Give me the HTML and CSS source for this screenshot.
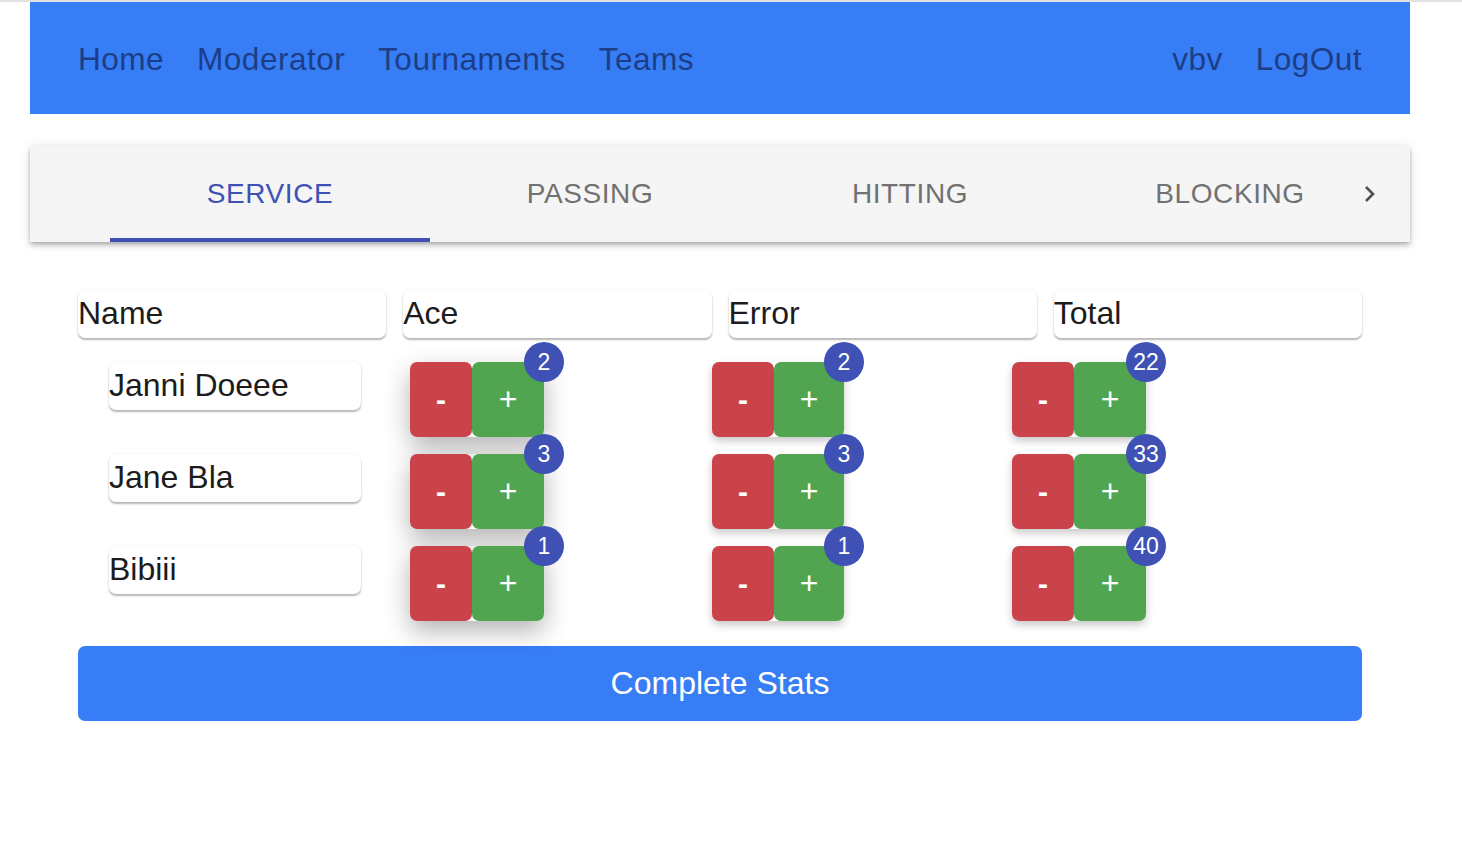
FILE: index.html
```html
<!DOCTYPE html>
<html lang="en">
<head>
<meta charset="utf-8">
<title>Stats</title>
<link rel="stylesheet" href="styles.css">
</head>
<body>
<div class="page">
  <nav class="navbar">
    <div class="nav-left">
      <a class="nav-link">Home</a>
      <a class="nav-link">Moderator</a>
      <a class="nav-link">Tournaments</a>
      <a class="nav-link">Teams</a>
    </div>
    <div class="nav-right">
      <a class="nav-link">vbv</a>
      <a class="nav-link">LogOut</a>
    </div>
  </nav>

  <div class="tabbar">
    <div class="tab-spacer"></div>
    <div class="tab-viewport">
      <div class="tab tab-active">SERVICE<span class="indicator"></span></div>
      <div class="tab">PASSING</div>
      <div class="tab">HITTING</div>
      <div class="tab">BLOCKING</div>
    </div>
    <div class="tab-arrow">
      <svg width="14" height="22" viewBox="0 0 14 22"><path d="M3 4 L10 11 L3 18" fill="none" stroke="#505050" stroke-width="2.6"/></svg>
    </div>
  </div>

  <section class="stats">
    <div class="head-row">
      <div class="head-cell">Name</div>
      <div class="head-cell">Ace</div>
      <div class="head-cell">Error</div>
      <div class="head-cell">Total</div>
    </div>

    <div class="rows">
      <div class="row">
        <div class="name-cell">Janni Doeee</div>
        <div class="group group-hot"><button class="btn minus">-</button><button class="btn plus">+</button><span class="badge">2</span></div>
        <div class="group"><button class="btn minus">-</button><button class="btn plus plus-narrow">+</button><span class="badge">2</span></div>
        <div class="group"><button class="btn minus">-</button><button class="btn plus">+</button><span class="badge">22</span></div>
      </div>
      <div class="row">
        <div class="name-cell">Jane Bla</div>
        <div class="group group-hot"><button class="btn minus">-</button><button class="btn plus">+</button><span class="badge">3</span></div>
        <div class="group"><button class="btn minus">-</button><button class="btn plus plus-narrow">+</button><span class="badge">3</span></div>
        <div class="group"><button class="btn minus">-</button><button class="btn plus">+</button><span class="badge">33</span></div>
      </div>
      <div class="row">
        <div class="name-cell">Bibiii</div>
        <div class="group group-hot"><button class="btn minus">-</button><button class="btn plus">+</button><span class="badge">1</span></div>
        <div class="group"><button class="btn minus">-</button><button class="btn plus plus-narrow">+</button><span class="badge">1</span></div>
        <div class="group"><button class="btn minus">-</button><button class="btn plus">+</button><span class="badge">40</span></div>
      </div>
    </div>

    <button class="complete">Complete Stats</button>
  </section>
</div>
</body>
</html>
```

FILE: styles.css
```css
html, body {
  margin: 0;
  padding: 0;
  background: #ffffff;
}
body {
  border-top: 2px solid #e2e2e2;
  font-family: "Liberation Sans", Arial, sans-serif;
  color: #1c1c1c;
}
.page {
  width: 1380px;
  margin-left: 30px;
}
.navbar {
  height: 112px;
  background: #377df5;
  display: flex;
  align-items: center;
  justify-content: space-between;
  padding: 4px 48px 0;
  box-sizing: border-box;
}
.nav-left, .nav-right {
  display: flex;
  gap: 33px;
}
.nav-link {
  font-size: 31.6px;
  letter-spacing: 0.45px;
  color: #1d3e86;
  line-height: 1;
}

.tabbar {
  margin-top: 32px;
  height: 96px;
  background: #f5f5f5;
  display: flex;
  box-shadow: 0 2px 4px -1px rgba(0,0,0,0.2), 0 4px 5px 0 rgba(0,0,0,0.14), 0 1px 10px 0 rgba(0,0,0,0.12);
}
.tab-spacer {
  width: 80px;
  flex: none;
}
.tab-viewport {
  flex: 1;
  display: flex;
  overflow: hidden;
}
.tab {
  position: relative;
  flex: none;
  width: 320px;
  display: flex;
  align-items: center;
  justify-content: center;
  font-size: 28px;
  letter-spacing: 0.6px;
  color: #717171;
}
.tab-active {
  color: #3f51b5;
}
.indicator {
  position: absolute;
  left: 0;
  right: 0;
  bottom: 0;
  height: 4px;
  background: #3f51b5;
}
.tab-arrow {
  width: 40px;
  flex: none;
  margin-right: 20px;
  display: flex;
  align-items: center;
  justify-content: center;
}

.stats {
  padding: 48px 48px 0;
}
.head-row {
  display: grid;
  grid-template-columns: repeat(4, 1fr);
  gap: 17px;
}
.head-cell {
  height: 48px;
  line-height: 46px;
  font-size: 32px;
  background: #fff;
  border-radius: 7px;
  box-shadow: 0 2px 2px rgba(0,0,0,0.28), 0 0 3px rgba(0,0,0,0.06);
}
.rows {
  margin-top: 24px;
  display: flex;
  flex-direction: column;
  gap: 17px;
}
.row {
  display: grid;
  grid-template-columns: 332px 302px 300px 1fr;
  align-items: start;
  height: 75px;
}
.name-cell {
  margin-left: 31px;
  width: 252px;
  height: 48px;
  line-height: 46px;
  font-size: 32px;
  background: #fff;
  border-radius: 7px;
  box-shadow: 0 2px 2px rgba(0,0,0,0.28), 0 0 3px rgba(0,0,0,0.06);
}
.group {
  position: relative;
  display: flex;
  width: max-content;
  border-radius: 7px;
  box-shadow: 0 4px 8px rgba(0,0,0,0.22);
}
.group-hot {
  box-shadow: 0 10px 26px rgba(0,0,0,0.3);
}
.btn {
  height: 75px;
  border: none;
  border-radius: 7px;
  padding: 0;
  color: #fff;
  font-family: "Liberation Sans", Arial, sans-serif;
  font-size: 32px;
  display: flex;
  align-items: center;
  justify-content: center;
}
.minus {
  width: 62px;
  background: #cb434a;
  font-weight: bold;
  font-size: 30px;
}
.plus {
  width: 72px;
  background: #52a550;
}
.plus-narrow {
  width: 70px;
}
.badge {
  position: absolute;
  top: 0;
  right: 0;
  transform: translate(50%, -50%);
  min-width: 40px;
  height: 40px;
  box-sizing: border-box;
  padding: 0 6px;
  border-radius: 20px;
  background: #3f51b5;
  color: #fff;
  font-size: 23px;
  display: flex;
  align-items: center;
  justify-content: center;
}
.complete {
  display: block;
  width: 100%;
  margin-top: 25px;
  height: 75px;
  border: none;
  border-radius: 7px;
  background: #377df5;
  color: #fff;
  font-family: "Liberation Sans", Arial, sans-serif;
  font-size: 32px;
}
```
